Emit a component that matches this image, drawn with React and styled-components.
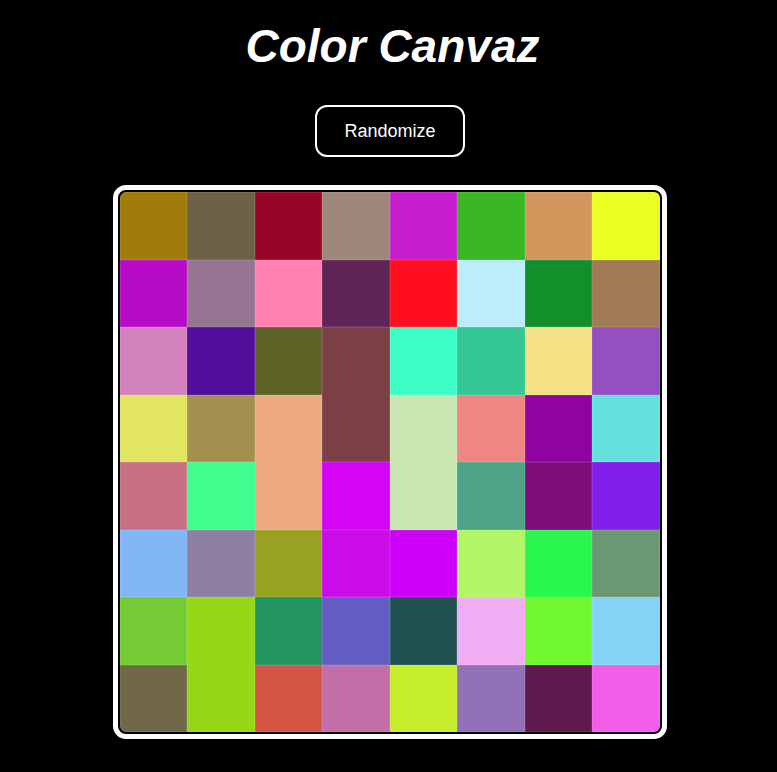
import React from "react";
import styled, { createGlobalStyle } from "styled-components";

const GlobalStyle = createGlobalStyle`
  body {
    margin: 0;
    background: #000;
    font-family: "Liberation Sans", Arial, sans-serif;
  }
`;

const Page = styled.div`
  display: flex;
  flex-direction: column;
  align-items: center;
  padding-top: 20px;
  min-height: 772px;
  box-sizing: border-box;
`;

const Title = styled.h1`
  margin: 0;
  color: #fff;
  font-size: 46px;
  font-style: italic;
  font-weight: 700;
  line-height: 53px;
  padding-left: 8px;
`;

const Button = styled.button`
  margin: 32px 0 0 3px;
  padding: 13px 27.5px;
  background: #000;
  color: #fff;
  border: 2px solid #fff;
  border-radius: 12px;
  font-family: "Liberation Sans", Arial, sans-serif;
  font-size: 18px;
  line-height: 22px;
  cursor: pointer;
`;

const Frame = styled.div`
  margin: 28px 0 0 2px;
  padding: 2px;
  background: #000;
  border: 5px solid #fff;
  border-radius: 13px;
`;

const Grid = styled.div`
  display: grid;
  grid-template-columns: repeat(8, 67.5px);
  grid-template-rows: repeat(8, 67.5px);
  border-radius: 6px;
  overflow: hidden;
`;

const Cell = styled.div`
  background: ${(props) => props.color};
  grid-row: span ${(props) => props.rows || 1};
  box-shadow: inset 0 0 0 0.5px rgba(255, 255, 255, 0.18);
`;

// null marks a slot covered by a cell spanning from the row above
const rows = [
  ["#a07c0a", "#6c6246", "#980427", "#9f877c", "#c61ccd", "#39b724", "#d3965c", "#eaff22"],
  ["#b80bc7", "#957591", "#ff82b0", "#5f2556", "#ff0e20", "#bcedfa", "#108f2a", "#a17b56"],
  ["#d282bc", "#520d9a", "#5e6428", ["#7a4045", 2], "#3dffc6", "#33c893", "#f4e186", "#954fc2"],
  ["#e2e55f", "#a6904f", ["#edaa7f", 2], null, ["#c8e7b1", 2], "#f08682", "#8f03a0", "#66e2de"],
  ["#c87182", "#40fd8e", null, "#d404f7", null, "#4fa387", "#7c0d7a", "#831fec"],
  ["#82b7f6", "#8d80a3", "#97a221", "#cb0ce8", "#cc00fb", "#b2f668", "#29f74e", "#6a9873"],
  ["#75cb33", ["#96d816", 2], "#21945f", "#625cc3", "#225152", "#f2aef5", "#6ff82f", "#84d2f6"],
  ["#716848", null, "#d55445", "#c46ea8", "#c7ef2c", "#9371b8", "#5f1a4e", "#f25ee9"],
];

function App() {
  const cells = [];
  rows.forEach((row, r) =>
    row.forEach((c, i) => {
      if (c === null) return;
      const [color, span] = Array.isArray(c) ? c : [c, 1];
      cells.push(<Cell key={`${r}-${i}`} color={color} rows={span} />);
    })
  );

  return (
    <Page>
      <GlobalStyle />
      <Title>Color Canvaz</Title>
      <Button>Randomize</Button>
      <Frame>
        <Grid>{cells}</Grid>
      </Frame>
    </Page>
  );
}

export default App;
